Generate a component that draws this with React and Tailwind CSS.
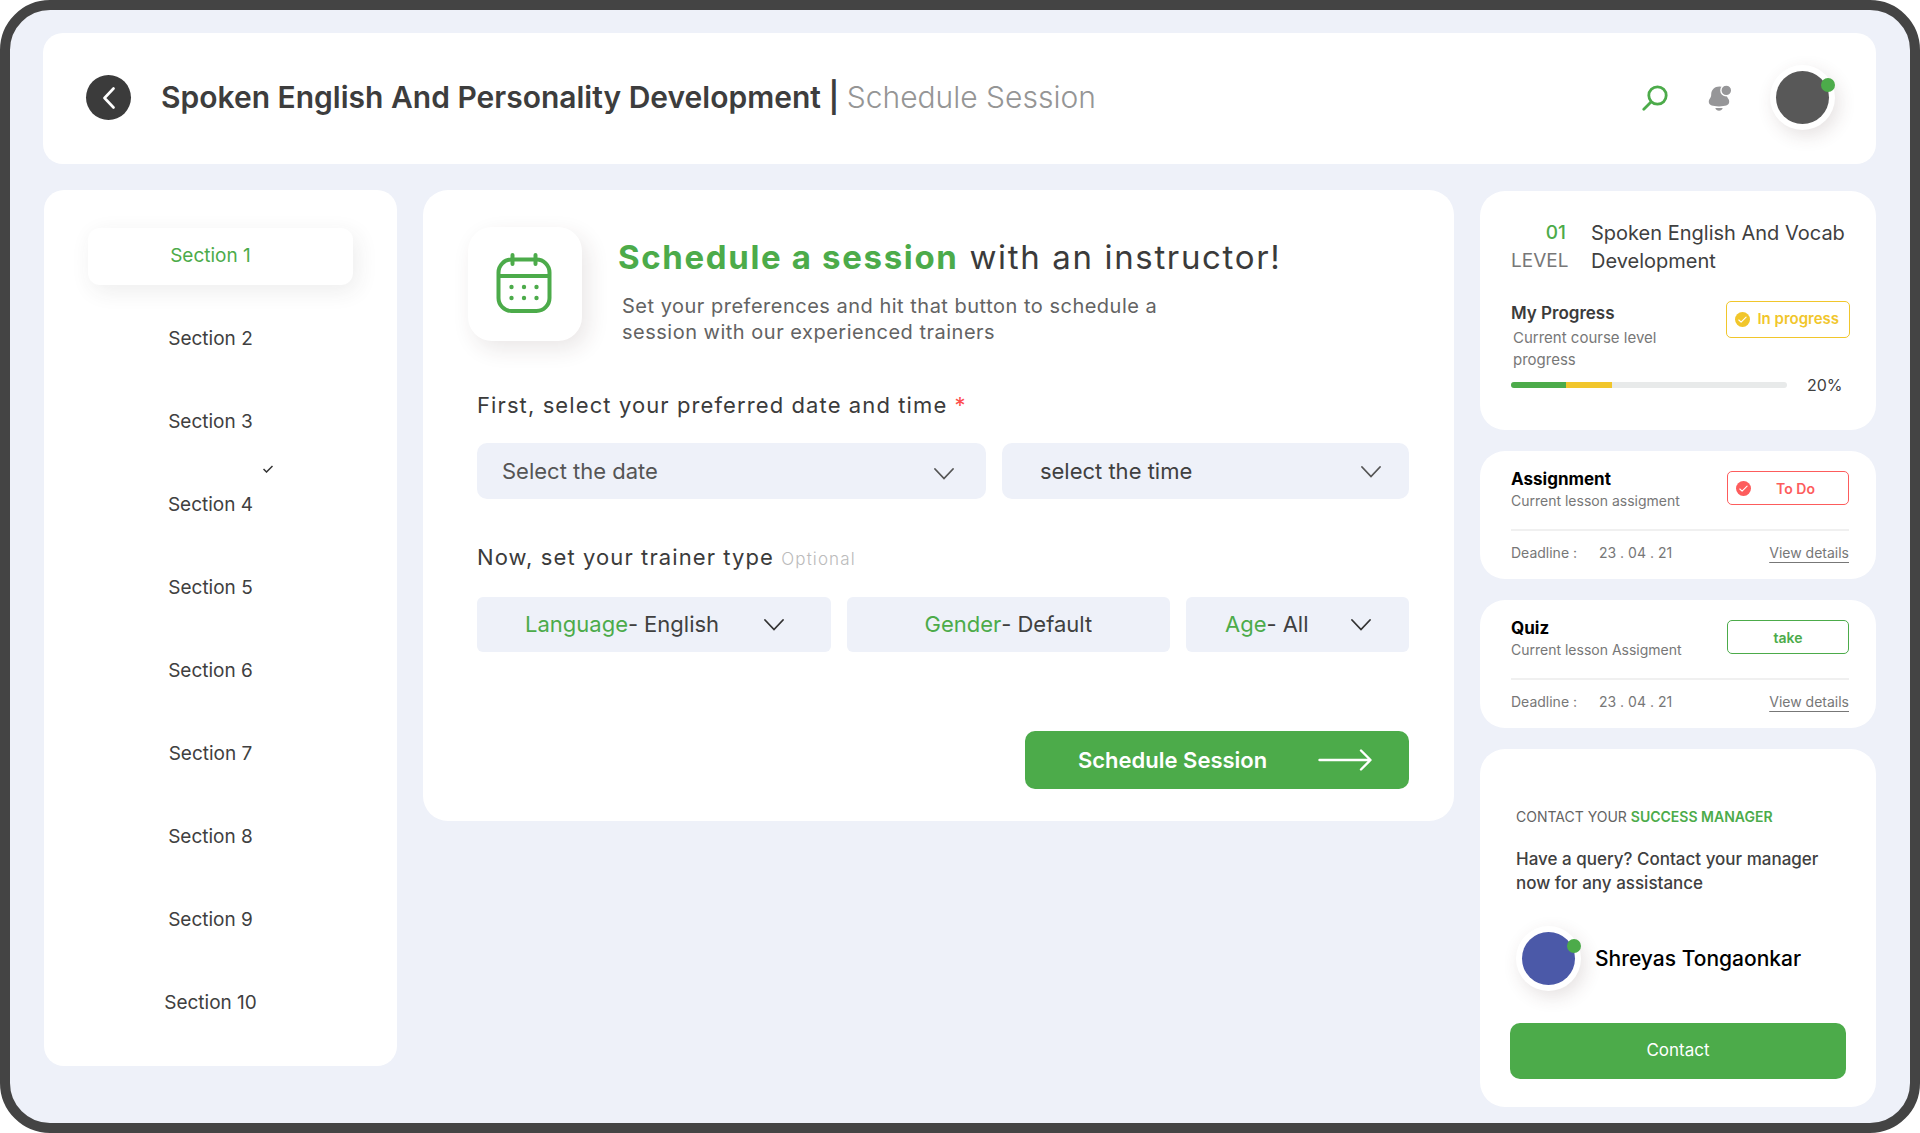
import React, { useState } from "react";

const sections = Array.from({ length: 10 }, (_, i) => `Section ${i + 1}`);

const tasks = [
  {
    title: "Assignment",
    subtitle: "Current lesson assigment",
    action: "To Do",
    checked: true,
    color: "border-[#fd5c5c] text-[#fd5c5c]",
  },
  {
    title: "Quiz",
    subtitle: "Current lesson Assigment",
    action: "take",
    checked: false,
    color: "border-[#4cab4a] text-[#4cab4a]",
  },
];

function Chevron({ className }) {
  return (
    <svg
      className={`pointer-events-none h-3 w-5 shrink-0 ${className}`}
      viewBox="0 0 20 12"
      fill="none"
      stroke="currentColor"
      strokeWidth="1.8"
      strokeLinecap="round"
    >
      <path d="M1 1l9 9.5L19 1" />
    </svg>
  );
}

function CheckBadge() {
  return (
    <svg className="h-[15px] w-[15px] shrink-0" viewBox="0 0 15 15" fill="none">
      <circle cx="7.5" cy="7.5" r="7.5" fill="currentColor" />
      <path
        d="M3.8 8l2.3 2.2 5-5"
        stroke="white"
        strokeWidth="1.1"
        strokeLinecap="round"
        strokeLinejoin="round"
      />
    </svg>
  );
}

function CalendarIcon() {
  return (
    <svg
      className="h-[60px] w-14"
      viewBox="0 0 56 60"
      fill="none"
      stroke="#4cab4a"
      strokeWidth="4"
      strokeLinecap="round"
    >
      <rect x="2.5" y="6.5" width="51" height="51.5" rx="13" />
      <path d="M3 23h50" />
      <path d="M16.5 2v9M39.5 2v9" />
      <g fill="#4cab4a" stroke="none">
        <circle cx="15.5" cy="34" r="2.2" />
        <circle cx="28" cy="34" r="2.2" />
        <circle cx="40.5" cy="34" r="2.2" />
        <circle cx="15.5" cy="45" r="2.2" />
        <circle cx="28" cy="45" r="2.2" />
        <circle cx="40.5" cy="45" r="2.2" />
      </g>
    </svg>
  );
}

function Avatar({ color }) {
  return (
    <div className="relative h-[65px] w-[65px] shrink-0 rounded-full bg-white p-1.5 shadow-[4px_6px_18px_rgba(80,50,50,0.14)]">
      <div className={`h-full w-full rounded-full ${color}`} />
      <span className="absolute top-[13px] right-0 h-3.5 w-3.5 rounded-full bg-[#4cab4a]" />
    </div>
  );
}

function Header() {
  return (
    <header className="flex items-center rounded-[20px] bg-white pt-8 pr-[41px] pb-[34px] pl-[43px]">
      <button
        aria-label="Back"
        className="flex h-[45px] w-[45px] items-center justify-center rounded-full bg-[#3b3b3b]"
      >
        <svg
          className="h-6 w-3"
          viewBox="0 0 12 24"
          fill="none"
          stroke="white"
          strokeWidth="2.6"
          strokeLinecap="round"
          strokeLinejoin="round"
        >
          <path d="M10.5 2.5L1.5 12l9 9.5" />
        </svg>
      </button>
      <h1 className="ml-[30px] text-[30px] font-semibold text-[#3d3d3d]">
        Spoken English And Personality Development |{" "}
        <span className="font-light text-[#959595]">Schedule Session</span>
      </h1>
      <div className="ml-auto flex items-center">
        <button aria-label="Search">
          <svg
            className="h-[26px] w-[26px]"
            viewBox="0 0 26 26"
            fill="none"
            stroke="#4cab4a"
            strokeWidth="2.8"
            strokeLinecap="round"
          >
            <circle cx="15.5" cy="10.5" r="8.7" />
            <path d="M9 17l-7.2 7.2" />
          </svg>
        </button>
        <button aria-label="Notifications" className="ml-10">
          <svg className="h-[26px] w-6" viewBox="0 0 24 26">
            <path
              fill="#969698"
              d="M11.5 1.5C6.5 1.5 3.2 5 3.2 9.5c0 2.2-.6 3.1-1.6 4.5C.6 15.4.6 17 1.2 18.600c.6 1.600 3 2.800 9.800 2.800s9.200-1.200 9.800-2.800c.6-1.600.6-3.200-.4-4.600-1-1.400-1.600-2.300-1.600-4.500 0-4.500-2.300-8-7.300-8z"
            />
            <path
              fill="#969698"
              d="M7.3 23h7.4c-.6 1.8-1.8 2.700-3.700 2.700S7.900 24.800 7.300 23z"
            />
            <circle
              cx="18.3"
              cy="5.4"
              r="5.4"
              fill="#969698"
              stroke="white"
              strokeWidth="1.4"
            />
          </svg>
        </button>
        <div className="ml-[38px]">
          <Avatar color="bg-[#585858]" />
        </div>
      </div>
    </header>
  );
}

function SectionList() {
  const [active, setActive] = useState("Section 1");

  return (
    <nav className="rounded-[20px] bg-white px-11 pt-[38px] pb-[34px]">
      <ul className="flex flex-col gap-[26px]">
        {sections.map((section) => (
          <li key={section} className="relative">
            <button
              onClick={() => setActive(section)}
              className={`h-[57px] w-full rounded-xl pr-5 text-[19px] ${
                section === active
                  ? "text-[#4cab4a] shadow-[4px_6px_22px_rgba(60,50,50,0.09)]"
                  : "text-[#404040]"
              }`}
            >
              {section}
            </button>
            {section === "Section 4" && (
              <svg
                className="absolute -top-3 right-20 h-2 w-2.5"
                viewBox="0 0 10 8"
                fill="none"
                stroke="#333"
                strokeWidth="1.5"
              >
                <path d="M.5 4l3 3L9.5 1" />
              </svg>
            )}
          </li>
        ))}
      </ul>
    </nav>
  );
}

function ScheduleForm() {
  return (
    <main className="rounded-[25px] bg-white px-[45px] pt-[37px] pb-8">
      <div className="flex">
        <div className="flex h-[114px] w-[114px] shrink-0 items-center justify-center rounded-3xl bg-white pr-0.5 pb-0.5 shadow-[6px_8px_22px_rgba(60,40,40,0.11)]">
          <CalendarIcon />
        </div>
        <div className="pt-2 pl-9">
          <h2 className="text-[33px] leading-[44px] tracking-wider text-[#3b3b3b]">
            <span className="font-bold text-[#4cab4a]">Schedule a session</span>{" "}
            with an instructor!
          </h2>
          <p className="mt-3.5 max-w-[580px] pl-1 text-[20px] leading-[26px] tracking-wide text-[#636363]">
            Set your preferences and hit that button to schedule a session with
            our experienced trainers
          </p>
        </div>
      </div>

      <form className="pl-[9px]" onSubmit={(e) => e.preventDefault()}>
        <h3 className="mt-11 text-[22px] leading-8 tracking-wider text-[#3b3b3b]">
          First, select your preferred date and time{" "}
          <span className="text-[#fd4c4c]">*</span>
        </h3>
        <div className="mt-[22px] grid grid-cols-[5fr_4fr] gap-4">
          <div className="relative">
            <select
              aria-label="Date"
              className="h-14 w-full appearance-none rounded-[10px] bg-[#eef1f9] pl-[25px] text-[22px] text-[#555]"
            >
              <option>Select the date</option>
            </select>
            <Chevron className="absolute top-[25px] right-8 text-[#555]" />
          </div>
          <div className="relative">
            <select
              aria-label="Time"
              className="h-14 w-full appearance-none rounded-[10px] bg-[#eef1f9] pl-[38px] text-[22px] text-[#404040]"
            >
              <option>select the time</option>
            </select>
            <Chevron className="absolute top-[23px] right-7 text-[#555]" />
          </div>
        </div>

        <h3 className="mt-[42px] text-[22px] leading-8 tracking-wider text-[#3b3b3b]">
          Now, set your trainer type{" "}
          <span className="text-[17px] font-light text-[#bbb]">Optional</span>
        </h3>
        <div className="mt-[22px] grid grid-cols-[354fr_323fr_223fr] gap-4 text-[22px] text-[#404040]">
          <div className="flex h-[55px] items-center rounded-md bg-[#eef1f9] pr-[47px] pl-12">
            <label htmlFor="language" className="text-[#4cab4a]">
              Language
            </label>
            <span className="pr-1.5">-</span>
            <select id="language" className="min-w-0 flex-1 appearance-none">
              <option>English</option>
            </select>
            <Chevron className="text-[#333]" />
          </div>
          <div className="flex h-[55px] items-center justify-center rounded-md bg-[#eef1f9]">
            <label htmlFor="gender" className="text-[#4cab4a]">
              Gender
            </label>
            <span className="pr-1.5">-</span>
            <select id="gender" className="appearance-none">
              <option>Default</option>
            </select>
          </div>
          <div className="flex h-[55px] items-center rounded-md bg-[#eef1f9] pr-[38px] pl-[39px]">
            <label htmlFor="age" className="text-[#4cab4a]">
              Age
            </label>
            <span className="pr-1.5">-</span>
            <select id="age" className="min-w-0 flex-1 appearance-none">
              <option>All</option>
            </select>
            <Chevron className="text-[#333]" />
          </div>
        </div>

        <button className="mt-[79px] ml-auto flex h-[58px] w-96 items-center justify-between rounded-[10px] bg-[#4cab4a] pr-[37px] pl-[53px] text-[22px] font-semibold text-white">
          Schedule Session
          <svg
            className="h-[22px] w-[54px]"
            viewBox="0 0 54 22"
            fill="none"
            stroke="white"
            strokeWidth="2.4"
            strokeLinecap="round"
            strokeLinejoin="round"
          >
            <path d="M1.5 11H52M43 1.5L52.5 11 43 20.5" />
          </svg>
        </button>
      </form>
    </main>
  );
}

function ProgressCard() {
  return (
    <section className="rounded-[25px] bg-white pt-7 pr-[26px] pb-[33px] pl-[31px]">
      <div className="flex gap-[25px]">
        <div className="w-[55px] shrink-0 text-right text-[19px] leading-7 text-[#777]">
          <span className="block font-medium text-[#4cab4a]">01</span>
          <span className="block">LEVEL</span>
        </div>
        <h2 className="text-[20px] leading-7 text-[#404040]">
          Spoken English And Vocab Development
        </h2>
      </div>
      <div className="mt-[26px] flex justify-between">
        <div>
          <h3 className="text-[17px] leading-6 font-semibold text-[#3b3b3b]">
            My Progress
          </h3>
          <p className="mt-0.5 w-40 pl-0.5 text-[15px] leading-[22px] text-[#777]">
            Current course level progress
          </p>
        </div>
        <span className="flex h-[37px] w-[124px] items-center justify-between rounded-[5px] border border-[#f1c62b] pr-2.5 pl-2 text-[15px] font-semibold text-[#f1c62b]">
          <CheckBadge />
          In progress
        </span>
      </div>
      <div className="mt-0.5 flex items-center gap-5 leading-6">
        <div className="flex h-1.5 flex-1 overflow-hidden rounded-full bg-[#e8eaea]">
          <div className="w-1/5 bg-[#4cab4a]" />
          <div className="w-1/6 bg-[#f1c62b]" />
        </div>
        <span className="w-[43px] text-[16px] text-[#404040]">20%</span>
      </div>
    </section>
  );
}

function TaskCard({ task }) {
  return (
    <section className="rounded-[25px] bg-white pt-4 pr-[27px] pb-4 pl-[31px] text-[14px] text-[#777]">
      <div className="flex justify-between">
        <div>
          <h3 className="text-[17px] leading-6 font-bold text-black">
            {task.title}
          </h3>
          <p className="leading-5">{task.subtitle}</p>
        </div>
        <button
          className={`mt-1 flex h-[34px] w-[122px] items-center rounded-[5px] border px-2 font-semibold ${task.color}`}
        >
          {task.checked && <CheckBadge />}
          <span className="flex-1">{task.action}</span>
        </button>
      </div>
      <div className="mt-[18px] flex border-t-2 border-[#f0f0f0] pt-3 leading-5">
        <span className="w-[88px]">Deadline :</span>
        <span>23 . 04 . 21</span>
        <a href="#details" className="ml-auto underline underline-offset-4">
          View details
        </a>
      </div>
    </section>
  );
}

function ContactCard() {
  return (
    <section className="rounded-[25px] bg-white px-[30px] pt-[58px] pb-7">
      <div className="pl-1.5">
        <h3 className="text-[14px] leading-5 text-[#636363]">
          CONTACT YOUR{" "}
          <span className="font-semibold text-[#4cab4a]">SUCCESS MANAGER</span>
        </h3>
        <p className="mt-5 max-w-[310px] text-[17px] leading-6 font-medium text-[#404040]">
          Have a query? Contact your manager now for any assistance
        </p>
        <div className="mt-[31px] flex items-center gap-[14px]">
          <Avatar color="bg-[#4b59a8]" />
          <span className="text-[21px] font-medium text-black">
            Shreyas Tongaonkar
          </span>
        </div>
      </div>
      <button className="mt-8 h-14 w-full rounded-[10px] bg-[#4cab4a] text-[17px] text-white">
        Contact
      </button>
    </section>
  );
}

function App() {
  return (
    <div className="min-h-screen rounded-[50px] border-[10px] border-[#444] bg-[#eef1f9] pt-[23px] pr-[34px] pb-[15px] pl-[33px] font-['Inter',sans-serif]">
      <Header />
      <div className="mt-[26px] grid grid-cols-[353px_minmax(0,1fr)_396px] items-start gap-[26px] pl-px">
        <SectionList />
        <ScheduleForm />
        <aside className="flex flex-col gap-[21px] pt-px">
          <ProgressCard />
          {tasks.map((task) => (
            <TaskCard key={task.title} task={task} />
          ))}
          <ContactCard />
        </aside>
      </div>
    </div>
  );
}

export default App;
